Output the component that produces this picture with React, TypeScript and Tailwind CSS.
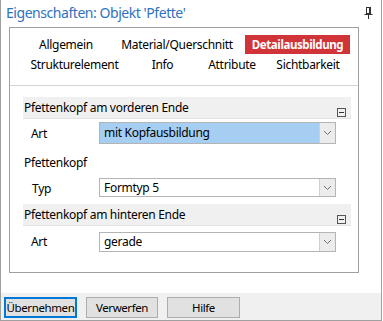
import React from "react";

const font = { fontFamily: '"Noto Sans", "Open Sans", sans-serif' };

function Chevron() {
  return (
    <svg width="9" height="6" viewBox="0 0 9 6">
      <path d="M1 1 L4.5 4.5 L8 1" fill="none" stroke="#707070" strokeWidth="1" />
    </svg>
  );
}

function Combo({ value, selected, h }: { value: string; selected?: boolean; h: string }) {
  return (
    <div className={`flex w-[237px] border border-[#b4b4b4] ${h} ${selected ? "bg-[#a6cdf2]" : "bg-white"}`}>
      <div className="flex flex-1 items-center pl-[4px] text-[12px] leading-none tracking-[-0.3px] text-black">{value}</div>
      <div className="flex w-[16px] items-center justify-center border-l border-[#d0d0d0] bg-[#ececec]">
        <Chevron />
      </div>
    </div>
  );
}

function CollapseIcon() {
  return (
    <div className="mb-[1px] mr-[5px] flex h-[9px] w-[9px] items-center justify-center border border-[#555]">
      <div className="h-[1px] w-[5px] bg-[#333]" />
    </div>
  );
}

function Header({ text, h }: { text: string; h: string }) {
  return (
    <div className={`flex ${h} items-stretch justify-between border-b border-[#e2e2e2] bg-[#f0f0f0]`}>
      <div className="flex items-center pl-[1px] text-[12px] leading-none tracking-[-0.3px] text-black">{text}</div>
      <div className="flex items-end">
        <CollapseIcon />
      </div>
    </div>
  );
}

export default function App() {
  return (
    <div
      className="flex h-[321px] w-[382px] flex-col border-b border-l border-r border-[#a0a0a0] bg-white"
      style={font}
    >
      {/* title */}
      <div className="flex h-[27px] items-start justify-between pl-[5px] pr-[8px]">
        <div className="mt-[3px] text-[14px] leading-[20px] tracking-[-0.45px] text-[#2f72c0]">Eigenschaften: Objekt 'Pfette'</div>
        <svg className="mt-[7px]" width="9" height="12" viewBox="0 0 9 12">
          <rect x="2.5" y="0.5" width="4" height="6" fill="none" stroke="#333" />
          <rect x="5" y="1" width="1.5" height="5.5" fill="#333" />
          <line x1="0.5" y1="7.5" x2="8.5" y2="7.5" stroke="#333" />
          <line x1="4.5" y1="8" x2="4.5" y2="12" stroke="#333" />
        </svg>
      </div>

      {/* panel */}
      <div className="ml-[8px] flex h-[246px] w-[350px] flex-col border border-[#a0a0a0]">
        {/* tabs */}
        <div className="flex h-[57px] flex-col text-[12px] tracking-[-0.3px] text-black">
          <div className="mt-[7px] flex h-[19px] items-stretch">
            <div className="ml-[11px] flex w-[90px] items-center justify-center">Allgemein</div>
            <div className="flex w-[132px] items-center justify-center">Material/Querschnitt</div>
            <div className="ml-[2px] flex w-[105px] items-center justify-center bg-[#d13438] text-[11.5px] font-bold tracking-[-0.4px] text-white">
              Detailausbildung
            </div>
          </div>
          <div className="mt-[1px] flex h-[20px] items-stretch">
            <div className="ml-[11px] flex w-[107px] items-center justify-center">Strukturelement</div>
            <div className="flex w-[69px] items-center justify-center">Info</div>
            <div className="flex w-[70px] items-center justify-center">Attribute</div>
            <div className="flex w-[82px] items-center justify-center">Sichtbarkeit</div>
          </div>
        </div>

        {/* property grid */}
        <div className="flex flex-1 flex-col border-t border-[#d4d4d4] pl-[13px] pr-[7px]">
          <div className="mt-[11px]">
            <Header text="Pfettenkopf am vorderen Ende" h="h-[22px]" />
          </div>
          <div className="flex h-[29px] items-start">
            <div className="mt-[7px] w-[76px] pl-[8px] text-[12px] leading-[16px] tracking-[-0.3px] text-black">Art</div>
            <div className="mt-[3px]">
              <Combo value="mit Kopfausbildung" selected h="h-[22px]" />
            </div>
          </div>
          <div className="flex h-[29px] items-center pl-[1px] text-[12px] tracking-[-0.3px] text-black">Pfettenkopf</div>
          <div className="flex h-[26px] items-start">
            <div className="mt-[4px] w-[76px] pl-[9px] text-[12px] leading-[16px] tracking-[-0.3px] text-black">Typ</div>
            <div className="mt-[1px]">
              <Combo value="Formtyp 5" h="h-[19px]" />
            </div>
          </div>
          <div className="mt-[1px]">
            <Header text="Pfettenkopf am hinteren Ende" h="h-[22px]" />
          </div>
          <div className="flex h-[28px] items-start">
            <div className="mt-[8px] w-[76px] pl-[8px] text-[12px] leading-[16px] tracking-[-0.3px] text-black">Art</div>
            <div className="mt-[6px]">
              <Combo value="gerade" h="h-[20px]" />
            </div>
          </div>
        </div>
      </div>

      <div className="flex-1" />

      {/* footer */}
      <div className="flex h-[27px] items-start gap-[8px] bg-[#f0f0f0] pl-[3px] pt-[4px] text-[11.5px] tracking-[-0.4px] text-black">
        <div className="flex h-[21px] w-[73px] items-center justify-center border-2 border-[#0078d7] bg-[#e1e1e1]">
          Übernehmen
        </div>
        <div className="ml-[1px] flex h-[21px] w-[72px] items-center justify-center border border-[#adadad] bg-[#e1e1e1]">
          Verwerfen
        </div>
        <div className="ml-[1px] flex h-[21px] w-[73px] items-center justify-center border border-[#adadad] bg-[#e1e1e1]">
          Hilfe
        </div>
      </div>
    </div>
  );
}
